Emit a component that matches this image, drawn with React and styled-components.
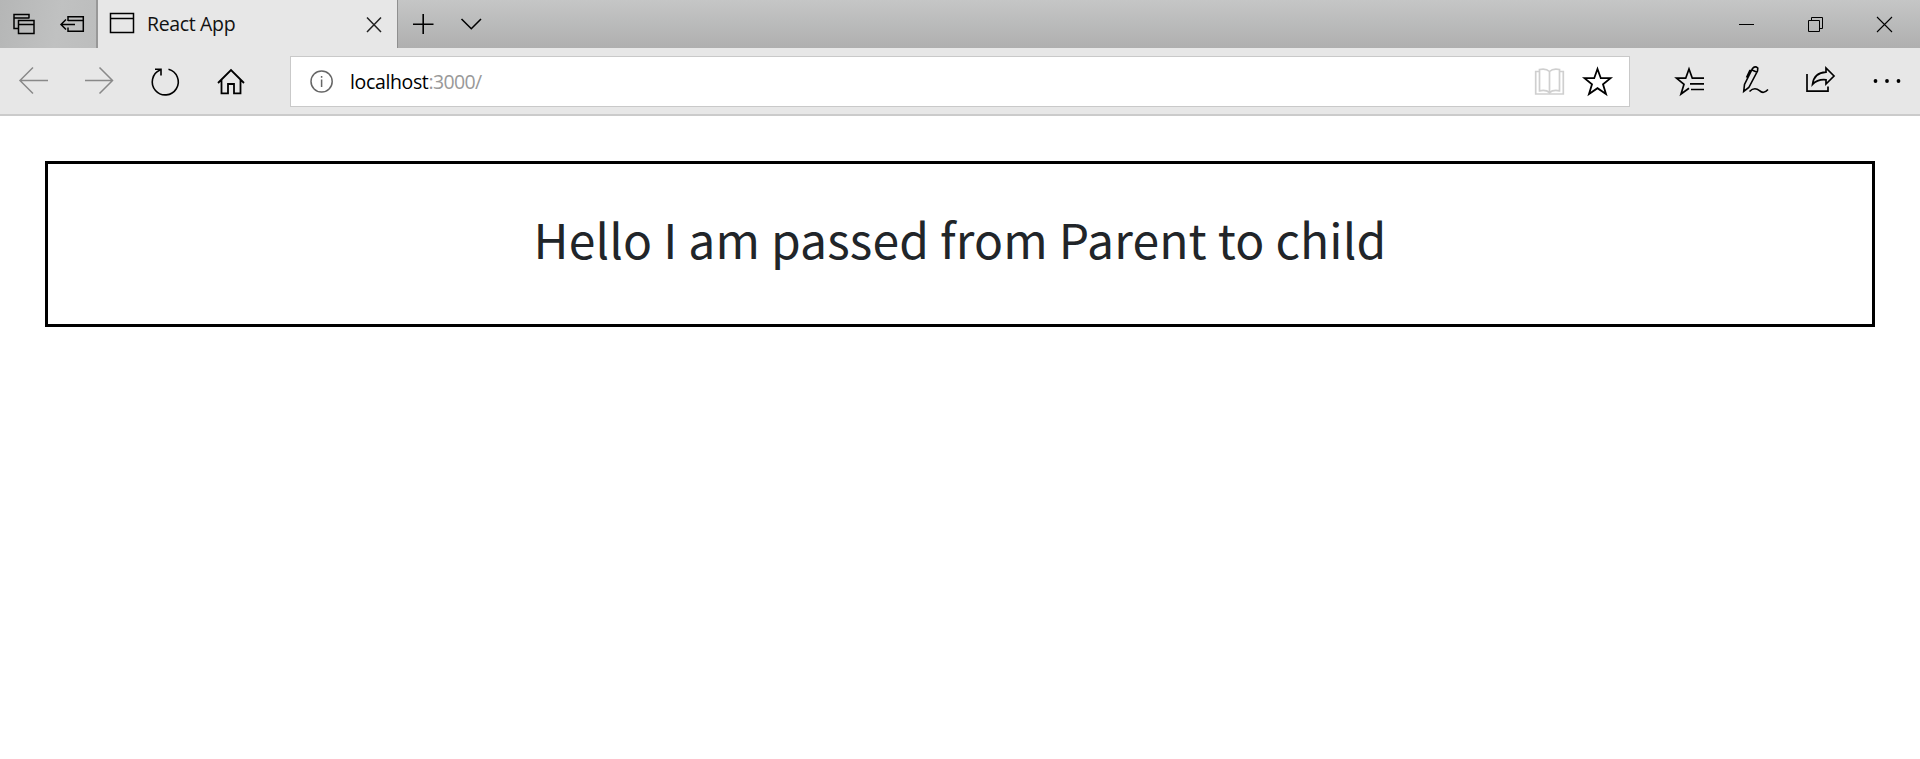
import React from "react";
import styled, { createGlobalStyle } from "styled-components";

const GlobalStyle = createGlobalStyle`
  * { box-sizing: border-box; }
  html, body { margin: 0; padding: 0; background: #fff; }
  body { font-family: "Open Sans", "Noto Sans", sans-serif; }
`;

const Window = styled.div`
  width: 1920px;
  height: 759px;
  overflow: hidden;
  background: #fff;
`;

const TabStrip = styled.header`
  display: flex;
  height: 48px;
  background: linear-gradient(#c5c6c6, #afafaf);
`;

const TabTools = styled.div`
  display: flex;
  width: 98px;
  border-right: 2px solid #989898;
  background: linear-gradient(100deg, #b5b6b6, #c0c1c1 60%, #bcbdbd);
`;

const IconButton = styled.button`
  display: flex;
  flex: none;
  width: ${(p) => p.$width}px;
  height: 100%;
  padding: 0;
  border: 0;
  background: transparent;
`;

const Glyph = styled.svg`
  display: block;
  fill: none;
  stroke: ${(p) => p.$color || "#000"};
  stroke-width: ${(p) => p.$weight || 1.5};
`;

const Tab = styled.div`
  display: flex;
  align-items: center;
  width: 299px;
  background: #e7e7e7;
`;

const TabTitle = styled.span`
  flex: 1;
  padding-left: 1px;
  font-size: 19.5px;
  line-height: 48px;
  letter-spacing: -0.35px;
  color: #111;
  white-space: nowrap;
`;

const StripTail = styled.div`
  display: flex;
  flex: 1;
  border-left: 1px solid #8f8f8f;
`;

const Spacer = styled.div`
  flex: 1;
`;

const Toolbar = styled.nav`
  display: flex;
  height: 68px;
  background: #e7e7e7;
  border-bottom: 2px solid #cbcbcb;
`;

const AddressBar = styled.div`
  display: flex;
  width: 1340px;
  height: 51px;
  margin: 8px 25px 0 26px;
  border: 1px solid #c9c9c9;
  background: #fff;
`;

const Url = styled.div`
  flex: 1;
  padding-left: 1px;
  font-size: 19.5px;
  line-height: 50px;
  letter-spacing: -0.36px;
  color: #000;
`;

const Port = styled.span`
  letter-spacing: -0.65px;
  color: #999;
`;

const Page = styled.main`
  padding: 45px;
`;

const MessageBox = styled.section`
  display: flex;
  justify-content: center;
  height: 166px;
  border: 3px solid #000;
`;

const Message = styled.h1`
  margin: 0;
  padding-top: 38px;
  font: 400 48px/72px "Noto Sans CJK JP", sans-serif;
  letter-spacing: 0.15px;
  color: #212529;
  white-space: nowrap;
`;

function Icon({ x, y, width, height, color, weight, label, children }) {
  return (
    <IconButton $width={width} aria-label={label}>
      <Glyph
        width={width}
        height={height}
        viewBox={`${x} ${y} ${width} ${height}`}
        $color={color}
        $weight={weight}
      >
        {children}
      </Glyph>
    </IconButton>
  );
}

const StripIcon = (props) => <Icon y={0} height={48} {...props} />;
const BarIcon = (props) => <Icon y={48} height={66} {...props} />;
const FieldIcon = (props) => <Icon y={57} height={49} {...props} />;

export default function App() {
  return (
    <Window>
      <GlobalStyle />
      <TabStrip>
        <TabTools>
          <StripIcon x={0} width={48} label="Tabs set aside">
            <path d="M18 28.5H14V14.5H29V18.5M14 18H29M18.5 20.5H34V33.5H18.5ZM18.5 24.5H34" />
          </StripIcon>
          <StripIcon x={48} width={48} label="Set tabs aside">
            <path d="M68 21V16.7H83.3V31.2H68V27.5M68 20.5H83.3M61 24.5H75M66 19.5L61 24.5L66 29.5" />
          </StripIcon>
        </TabTools>
        <Tab>
          <StripIcon x={98} width={48} label="Page">
            <path d="M110.5 13.5H133.5V32.5H110.5ZM110.5 18.5H133.5" />
          </StripIcon>
          <TabTitle>React App</TabTitle>
          <StripIcon x={351} width={46} color="#222" label="Close tab">
            <path d="M367 17.5L381 32M381 17.5L367 32" />
          </StripIcon>
        </Tab>
        <StripTail>
          <StripIcon x={398} width={49} weight={1.6} label="New tab">
            <path d="M413 24.2H433.5M423.2 14V34" />
          </StripIcon>
          <StripIcon x={447} width={48} weight={1.6} label="Tab previews">
            <path d="M461.5 19L471.3 28.7L481 19" />
          </StripIcon>
          <Spacer />
          <StripIcon x={1713} width={69} weight={1} label="Minimize">
            <path d="M1739 24.5H1754" />
          </StripIcon>
          <StripIcon x={1782} width={69} weight={1} label="Restore">
            <path d="M1808.5 20.5H1819.5V31.5H1808.5ZM1811.5 20.5V17.5H1822.5V28.5H1819.5" />
          </StripIcon>
          <StripIcon x={1851} width={69} weight={1.1} label="Close window">
            <path d="M1877 17L1892 32M1892 17L1877 32" />
          </StripIcon>
        </StripTail>
      </TabStrip>
      <Toolbar>
        <BarIcon x={0} width={66} color="#898989" label="Back">
          <path d="M48 80.5H20M33 67.5L20 80.5L33 93.5" />
        </BarIcon>
        <BarIcon x={66} width={66} color="#898989" label="Forward">
          <path d="M85 80.5H113M99.5 67.5L112.5 80.5L99.5 93.5" />
        </BarIcon>
        <BarIcon x={132} width={66} weight={1.6} label="Refresh">
          <path d="M168.5 69.3A13 13 0 1 1 160 70M155 69.2H161V75.5" />
        </BarIcon>
        <BarIcon x={198} width={66} weight={1.8} label="Home">
          <path d="M218 83L231 70L244 83M221.5 80V93.3H228V84H234V93.3H240.5V80" />
        </BarIcon>
        <AddressBar>
          <FieldIcon x={291} width={58} color="#666" weight={1.5} label="Site info">
            <circle cx="321.6" cy="81.5" r="10.6" />
            <path d="M321.6 79.5V87M321.6 76V77.8" />
          </FieldIcon>
          <Url>
            localhost<Port>:3000/</Port>
          </Url>
          <FieldIcon x={1525} width={48} color="#cfcfcf" weight={1.7} label="Reading view">
            <path d="M1539.5 71.5H1535.7V94H1563.3V71.5H1559.5M1549.5 71.5V92.5M1539.5 90.8V69.5Q1546 68 1549.5 71.5Q1553 68 1559.5 69.5V90.8Q1553 89.5 1549.5 92.5Q1546 89.5 1539.5 90.8Z" />
          </FieldIcon>
          <FieldIcon x={1573} width={56} weight={1.8} label="Add to favorites">
            <path d="M1597.5 69L1600.8 78.2H1610.5L1603 84.3L1606 94L1597.5 88.2L1589 94L1592 84.3L1584.5 78.2H1594.2Z" />
          </FieldIcon>
        </AddressBar>
        <BarIcon x={1655} width={68} weight={1.7} label="Favorites hub">
          <path d="M1704 78.2H1692.3L1689 69L1685.7 78.2H1676.5L1684 84.3L1681 94L1689 88.3M1690 83.8H1704M1691 89.5H1704" />
        </BarIcon>
        <BarIcon x={1723} width={64} weight={1.6} label="Add notes">
          <path d="M1743.7 91.5L1744.5 84.5L1752.5 68.5Q1755 65.5 1757.8 68L1757.5 71L1748.8 87.5ZM1752 70L1757 72.3M1746.5 77.5L1749.8 70.5H1752M1749.5 91.5Q1754.5 86.5 1759.5 90.7Q1763.5 94.5 1768 89.5" />
        </BarIcon>
        <BarIcon x={1787} width={68} weight={1.7} label="Share">
          <path d="M1807 74V91.2H1828V86.5M1812.5 84.5Q1814 72.7 1826 72.2V68L1834 76L1826 84V79.8Q1817.5 79 1812.5 84.5Z" />
        </BarIcon>
        <BarIcon x={1855} width={65} label="More">
          <g fill="#000" stroke="none">
            <circle cx="1875.5" cy="81" r="1.9" />
            <circle cx="1887" cy="81" r="1.9" />
            <circle cx="1898.5" cy="81" r="1.9" />
          </g>
        </BarIcon>
      </Toolbar>
      <Page>
        <MessageBox>
          <Message>Hello I am passed from Parent to child</Message>
        </MessageBox>
      </Page>
    </Window>
  );
}
